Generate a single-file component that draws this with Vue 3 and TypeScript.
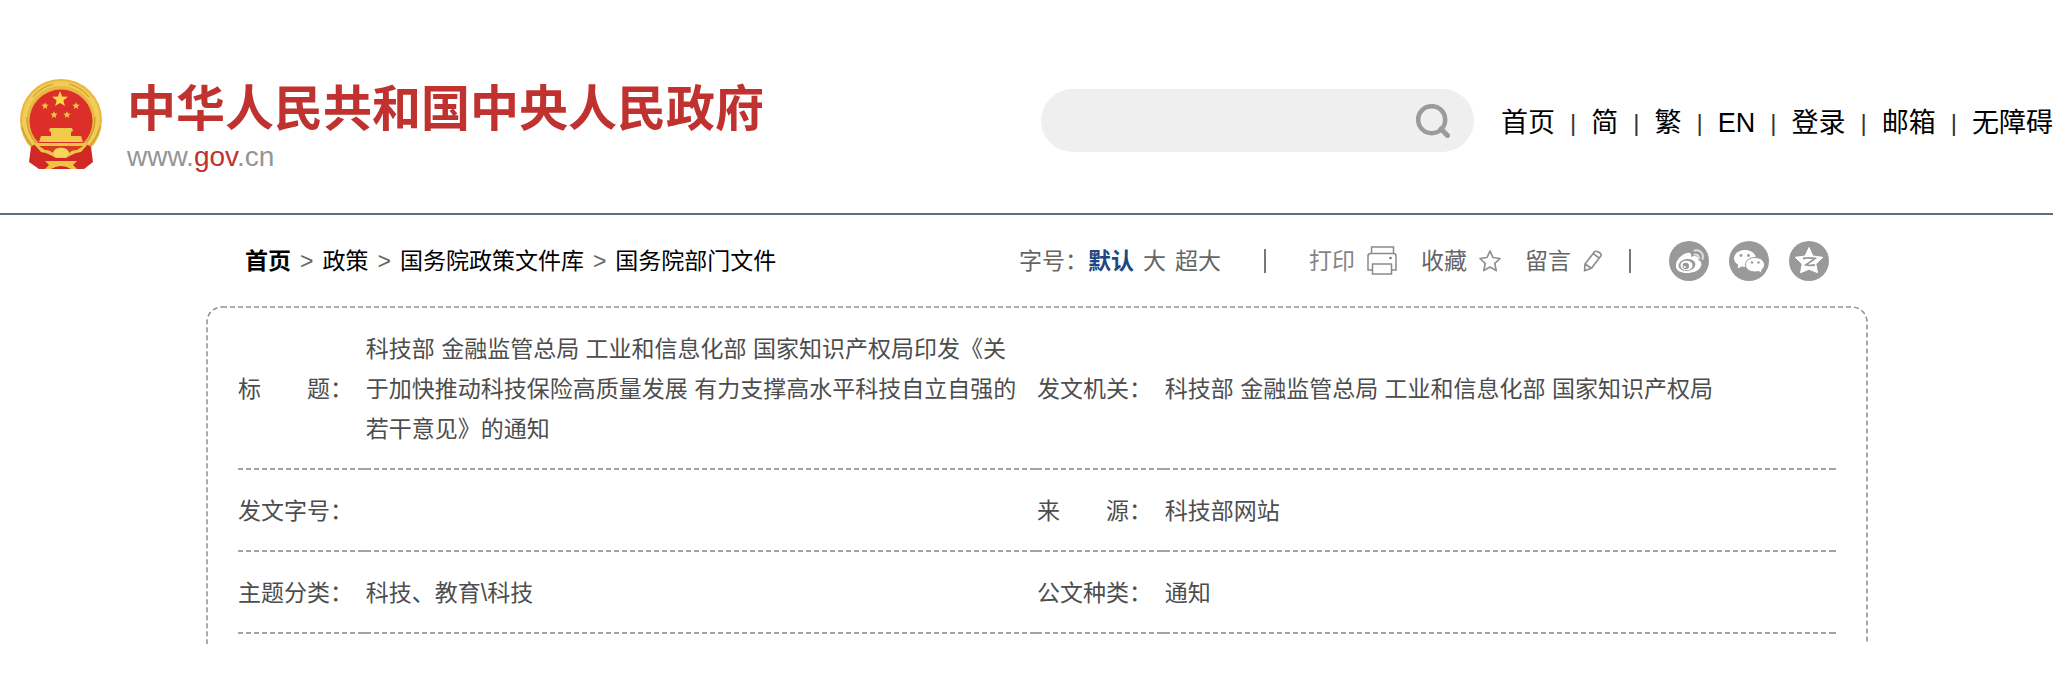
<script setup lang="ts">
interface Row {
  label: string
  value: string
  label2: string
  value2: string
}

const nav: string[] = ['首页', '简', '繁', 'EN', '登录', '邮箱', '无障碍']
const crumbs: string[] = ['首页', '政策', '国务院政策文件库', '国务院部门文件']
const rows: Row[] = [
  {
    label: '标\u3000\u3000题：',
    value: '科技部 金融监管总局 工业和信息化部 国家知识产权局印发《关于加快推动科技保险高质量发展 有力支撑高水平科技自立自强的若干意见》的通知',
    label2: '发文机关：',
    value2: '科技部 金融监管总局 工业和信息化部 国家知识产权局',
  },
  { label: '发文字号：', value: '', label2: '来\u3000\u3000源：', value2: '科技部网站' },
  { label: '主题分类：', value: '科技、教育\\科技', label2: '公文种类：', value2: '通知' },
]
</script>

<template>
  <div class="page">
    <header class="header">
      <a class="brand" href="#">
        <svg class="emblem" viewBox="0 0 84 90" aria-hidden="true">
          <circle cx="42" cy="41" r="41" fill="#e6b83f" />
          <circle cx="42" cy="41" r="36.500" fill="none" stroke="#f0cd56" stroke-width="5" />
          <path d="M3 48q4 14 14 22M81 48q-4 14-14 22M8 38q-1 14 10 28M76 38q1 14-10 28M14 18q8-10 20-13M70 18q-8-10-20-13" fill="none" stroke="#cf9a2f" stroke-width="1.200" />
          <circle cx="42" cy="42" r="31.500" fill="#dc2f2a" />
          <path d="M41 12l2.100 5.400 5.800.3-4.500 3.700 1.500 5.600-4.900-3.100-4.900 3.100 1.500-5.600-4.500-3.700 5.800-.3z" fill="#f7d650" />
          <g fill="#f3c648">
            <path id="s" d="M26 23.200l1 2.400 2.600.2-2 1.700.6 2.500-2.200-1.400-2.200 1.400.6-2.500-2-1.700 2.600-.2z" />
            <use href="#s" x="31" />
            <use href="#s" x="9" y="9" />
            <use href="#s" x="22" y="9" />
          </g>
          <path d="M12 68l6-4 24 10 24-10 6 4 2 15-9 7H20l-10-7z" fill="#d02824" />
          <path d="M31 49h22l1 3-2 1v4h10l2 6H20l2-6h10v-4l-2-1z" fill="#f3cb4c" />
          <path d="M14 64h56l-8 9c-7 1-11 4-15 6H37c-4-2-8-5-15-6z" fill="#efc443" />
          <path d="M20 67h44l-6 4c-4 0-6 1-8 3-3-5-13-5-16 0-2-2-4-3-8-3z" fill="#d93a28" />
          <path d="M34 74c1-7 15-7 16 0l-3 4H37z" fill="#f6d75d" />
          <path d="M26 82h32l-4 4 4 4h-6q-10-6-20 0h-6l4-4z" fill="#efc443" />
        </svg>
        <span class="names">
          <span class="title">中华人民共和国中央人民政府</span>
          <span class="domain">www.<b>gov</b>.cn</span>
        </span>
      </a>
      <form class="search" role="search" @submit.prevent>
        <input type="text" aria-label="搜索" />
        <button type="submit" aria-label="搜索">
          <svg viewBox="0 0 34 34" aria-hidden="true">
            <g fill="none" stroke="#9b9b9b" stroke-width="4.500">
              <circle cx="15.700" cy="15.700" r="13.500" />
              <path d="M25 25l6.500 6.500" stroke-width="5" stroke-linecap="round" />
            </g>
          </svg>
        </button>
      </form>
      <nav class="nav">
        <template v-for="(item, i) in nav" :key="item">
          <span v-if="i > 0" class="bar">|</span>
          <a href="#">{{ item }}</a>
        </template>
      </nav>
    </header>

    <main class="main">
      <div class="tools">
        <nav class="crumbs">
          <template v-for="(c, i) in crumbs" :key="c">
            <span v-if="i > 0" class="gt">&gt;</span>
            <a href="#" :class="{ home: i === 0 }">{{ c }}</a>
          </template>
        </nav>
        <div class="actions">
          <div class="sizes">
            <span>字号：</span>
            <button type="button" class="active">默认</button>
            <button type="button">大</button>
            <button type="button">超大</button>
          </div>
          <span class="rule"></span>
          <div class="links">
            <button type="button" class="print">
              打印
              <svg width="30" height="29" viewBox="0 0 30 29" fill="none" stroke="#8a8a8a" stroke-width="1.500" aria-hidden="true">
                <path d="M4.500 7.500V1h22v6.500M5 24H1V10q0-2.500 2.500-2.500h23q2.500 0 2.500 2.500v14h-4M5.500 18h19v10h-19z" />
                <circle cx="23.500" cy="12" r="1.300" fill="#777" stroke="none" />
              </svg>
            </button>
            <button type="button">
              收藏
              <svg width="22" height="22" viewBox="0 0 22 22" fill="none" stroke="#8e8e8e" stroke-width="1.700" stroke-linejoin="round" aria-hidden="true">
                <path d="M11 1l3 6.500 7 1-5.200 4.900 1.400 7.200-6.200-3.500-6.200 3.500 1.400-7.200L1 8.500l7-1z" />
              </svg>
            </button>
            <button type="button">
              留言
              <svg width="20" height="22" viewBox="0 0 20 22" fill="none" stroke="#8e8e8e" stroke-width="1.700" stroke-linejoin="round" aria-hidden="true">
                <path d="M2 14L11.500 1.800Q13 .7 15 1.800L17.300 3.300Q18.700 4.500 17.800 6L8.500 18.300 1.600 20.700zM10.300 3.600l5.800 4.500M2 14l6.500 4.300" />
              </svg>
            </button>
          </div>
          <span class="rule"></span>
          <div class="share">
            <a href="#" aria-label="微博">
              <svg viewBox="0 0 40 40" aria-hidden="true">
                <circle cx="20" cy="20" r="20" fill="#999" />
                <path d="M18 12c3-1 5 0 4 4 4-2 8-1 7 3 3 1 4 3 3 6-2 5-8 7-14 7-7 0-12-3-11-8 0-5 6-11 11-12z" fill="#fff" />
                <ellipse cx="18" cy="24" rx="8.500" ry="6" fill="#999" transform="rotate(-8 18 24)" />
                <ellipse cx="17.500" cy="24.500" rx="6" ry="4.800" fill="#fff" />
                <circle cx="16.800" cy="25" r="3.200" fill="#999" />
                <circle cx="15.800" cy="26" r="1.100" fill="#fff" />
                <path d="M25.500 9.500c6-1 9.500 3 8 8.500" fill="none" stroke="#e0e0e0" stroke-width="2" stroke-linecap="round" />
                <path d="M25.500 13.500c3-.5 5 1.500 4.300 4.300" fill="none" stroke="#e0e0e0" stroke-width="2" stroke-linecap="round" />
              </svg>
            </a>
            <a href="#" aria-label="微信">
              <svg viewBox="0 0 40 40" aria-hidden="true">
                <circle cx="20" cy="20" r="20" fill="#999" />
                <path d="M16 9c6.500 0 11 4 11 8.500S22.500 26 16 26c-1.200 0-2.300-.1-3.300-.4L8.500 27.500l.8-3.700C6.600 22.300 5 20 5 17.500 5 13 9.500 9 16 9z" fill="#fff" />
                <path d="M26 16.500c5.500 0 9.500 3.200 9.500 7.300 0 2.200-1.200 4-3 5.400l.6 3-3.500-1.700c-1.100.3-2.300.5-3.600.5-5.500 0-9.500-3-9.500-7.200s4-7.300 9.500-7.300z" fill="#fff" stroke="#999" stroke-width="1" />
                <g fill="#999">
                  <circle cx="12" cy="14.500" r="1.400" /><circle cx="19.500" cy="14.500" r="1.400" />
                  <circle cx="23" cy="21.500" r="1.200" /><circle cx="29.500" cy="21.500" r="1.200" />
                </g>
              </svg>
            </a>
            <a href="#" aria-label="QQ空间">
              <svg viewBox="0 0 40 40" aria-hidden="true">
                <circle cx="20" cy="20" r="20" fill="#999" />
                <path d="M20 6.500l4 8.600 9.800 1.200-7 6.600 1.700 8.800-8.500-3.500-8.500 3.500 1.700-8.800-7-6.600 9.800-1.200z" fill="#fff" stroke="#fff" stroke-linejoin="round" />
                <path d="M14 17.500c4-.9 8-.8 12 0l-9 6.300c3 .7 6 .7 9 .2" fill="none" stroke="#999" stroke-width="1.800" />
              </svg>
            </a>
          </div>
        </div>
      </div>

      <section class="card">
        <svg class="frame" aria-hidden="true"><rect x="1" y="1" rx="15" /></svg>
        <table>
          <tbody>
            <tr v-for="r in rows" :key="r.label">
              <th scope="row">{{ r.label }}</th>
              <td>{{ r.value }}</td>
              <th scope="row">{{ r.label2 }}</th>
              <td>{{ r.value2 }}</td>
            </tr>
          </tbody>
        </table>
      </section>
    </main>
  </div>
</template>

<style>
body {
  margin: 0;
  background: #fff;
}
</style>

<style scoped>
.page {
  overflow: hidden;
  padding-bottom: 48px;
  font-family: "Liberation Sans", "Noto Sans CJK SC", sans-serif;
  font-size: 23px;
  line-height: 40px;
  color: #4d4d4d;
}
a {
  color: inherit;
  text-decoration: none;
}
button {
  display: flex;
  align-items: center;
  padding: 0;
  border: 0;
  background: none;
  font: inherit;
  color: inherit;
  cursor: pointer;
}
.header {
  display: flex;
  align-items: center;
  height: 215px;
  padding: 28px 0 0 19px;
  box-sizing: border-box;
  border-bottom: 2px solid #5c6d7e;
  white-space: nowrap;
}
.brand {
  display: flex;
  align-items: center;
  gap: 24px;
  padding-top: 6px;
}
.emblem {
  width: 84px;
  height: 90px;
}
.names {
  display: flex;
  flex-direction: column;
  gap: 6px;
}
.title {
  font-family: "Noto Sans CJK SC", sans-serif;
  font-size: 49px;
  line-height: 60px;
  font-weight: 700;
  color: #c0322f;
}
.domain {
  font-size: 28px;
  line-height: 32px;
  color: #959595;
}
.domain b {
  font-weight: 400;
  color: #c0322f;
}
.search {
  display: flex;
  align-items: center;
  width: 433px;
  height: 63px;
  margin-left: auto;
  border-radius: 32px;
  background: #efefef;
}
.search input {
  flex: 1;
  min-width: 0;
  height: 100%;
  padding: 0 0 0 28px;
  border: 0;
  outline: 0;
  background: transparent;
  font: inherit;
}
.search button {
  margin-right: 24px;
}
.search svg {
  width: 34px;
  height: 34px;
}
.nav {
  display: flex;
  gap: 15px;
  margin-left: 27px;
  padding-top: 4px;
  font-size: 27px;
  color: #000;
}
.bar {
  font-size: 24px;
  color: #333;
}
.main {
  padding: 0 185px 0 206px;
}
.tools {
  display: flex;
  justify-content: space-between;
  align-items: center;
  height: 91px;
  padding: 0 39px;
  white-space: nowrap;
}
.crumbs {
  display: flex;
  gap: 9px;
  color: #000;
}
.home {
  font-weight: 700;
}
.gt {
  color: #666;
}
.actions,
.sizes,
.links,
.share {
  display: flex;
  align-items: center;
}
.actions {
  color: #666;
}
.sizes {
  gap: 9px;
}
.sizes .active {
  margin-left: -9px;
  font-weight: 700;
  color: #1c4783;
}
.rule {
  width: 2px;
  height: 24px;
  margin: 0 43px;
  background: #777;
}
.links {
  gap: 24px;
}
.links button {
  gap: 12px;
}
.links + .rule {
  margin: 0 38px 0 26px;
}
.print {
  color: #858585;
}
.share {
  gap: 20px;
}
.share a,
.share svg {
  display: block;
  width: 40px;
  height: 40px;
}
.card {
  position: relative;
  overflow: hidden;
  padding: 2px 32px 10px;
}
.frame {
  position: absolute;
  top: 0;
  left: 0;
  width: 100%;
  height: 100%;
  pointer-events: none;
}
.frame rect {
  width: calc(100% - 2px);
  height: calc(100% + 40px);
  fill: none;
  stroke: #8f8f8f;
  stroke-width: 1.500px;
  stroke-dasharray: 5 3;
}
table {
  width: 100%;
  table-layout: fixed;
  border-collapse: collapse;
}
th,
td {
  padding: 21px 0;
  text-align: left;
  vertical-align: middle;
  font-weight: 400;
  background:
    linear-gradient(#a3a3a3, #a3a3a3) right bottom / 5px 2px no-repeat,
    linear-gradient(90deg, #a3a3a3 5px, transparent 5px) left bottom / 8px 2px repeat-x;
}
th {
  width: 8%;
  white-space: nowrap;
}
td {
  width: 42%;
  padding-right: 16px;
  box-sizing: border-box;
}
</style>
